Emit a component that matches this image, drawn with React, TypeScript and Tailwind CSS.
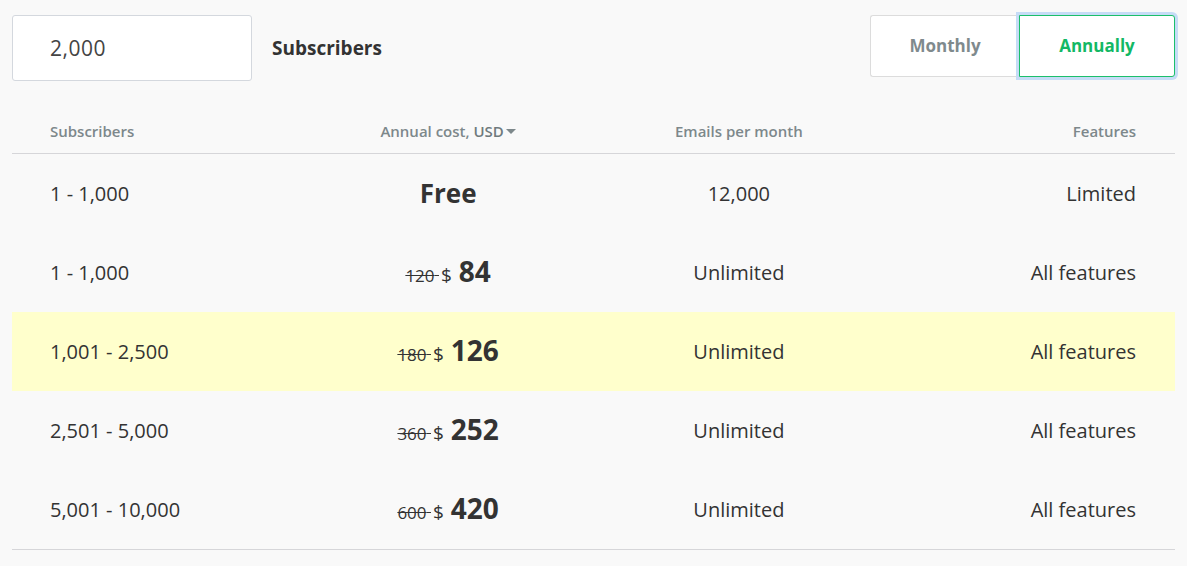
import React from "react";

const rows = [
  { range: "1 - 1,000", old: "", price: "Free", emails: "12,000", features: "Limited" },
  { range: "1 - 1,000", old: "120", price: "84", emails: "Unlimited", features: "All features" },
  { range: "1,001 - 2,500", old: "180", price: "126", emails: "Unlimited", features: "All features", active: true },
  { range: "2,501 - 5,000", old: "360", price: "252", emails: "Unlimited", features: "All features" },
  { range: "5,001 - 10,000", old: "600", price: "420", emails: "Unlimited", features: "All features" },
];

export default function App() {
  return (
    <div className="min-h-[566px] w-full bg-[#f9f9f9] px-3 pt-[15px] text-[#333] font-['Open_Sans','Liberation_Sans',sans-serif]">
      <div className="flex items-start justify-between">
        <div className="flex items-center">
          <input
            defaultValue="2,000"
            className="h-[66px] w-[240px] rounded-[3px] border border-[#d4d8de] bg-white pl-[37px] text-[21px] tracking-[0.5px] text-[#444] outline-none"
          />
          <span className="ml-5 text-[19px] font-bold text-[#333]">Subscribers</span>
        </div>
        <div className="flex h-[62px]">
          <button className="w-[149px] rounded-l-[3px] border border-r-0 border-[#dcdcdc] bg-white text-[17px] font-bold text-[#7f8a8d]">
            Monthly
          </button>
          <button className="w-[156px] rounded-r-[3px] border border-[#1cbf6b] bg-white text-[17px] font-bold text-[#13b865] shadow-[0_0_0_3px_#c6dcf6]">
            Annually
          </button>
        </div>
      </div>

      <div className="mt-[20px]">
        <div className="grid h-[53px] grid-cols-4 items-center border-b border-[#d6d6d9] pt-[8px] text-[15px] font-semibold text-[#7d888b]">
          <div className="pl-[38px]">Subscribers</div>
          <div className="flex items-center justify-center">
            Annual cost,&nbsp;<span className="text-[#6f7a7d]">USD</span>
            <svg width="10" height="6" viewBox="0 0 10 6" className="ml-[2px] mt-[2px]">
              <path d="M0 0h10L5 5z" fill="#7d888b" />
            </svg>
          </div>
          <div className="text-center">Emails per month</div>
          <div className="pr-[39px] text-right">Features</div>
        </div>

        {rows.map((r, i) => (
          <div
            key={i}
            className={`grid h-[79px] grid-cols-4 items-center text-[20px] text-[#333] ${r.active ? "bg-[#ffffcc]" : ""}`}
          >
            <div className="pl-[38px]">{r.range}</div>
            {r.old ? (
              <div className="mb-[4px] flex items-baseline justify-center">
                <span className="text-[17px] line-through decoration-[#333]">{r.old}&nbsp;</span>
                <span className="ml-[2px] text-[19px]">$</span>
                <span className="ml-[7px] text-[28px] font-bold">{r.price}</span>
              </div>
            ) : (
              <div className="flex justify-center">
                <span className="text-[26px] font-bold">{r.price}</span>
              </div>
            )}
            <div className="text-center">{r.emails}</div>
            <div className="pr-[39px] text-right">{r.features}</div>
          </div>
        ))}
        <div className="border-t border-[#d6d6d9]" />
      </div>
    </div>
  );
}
